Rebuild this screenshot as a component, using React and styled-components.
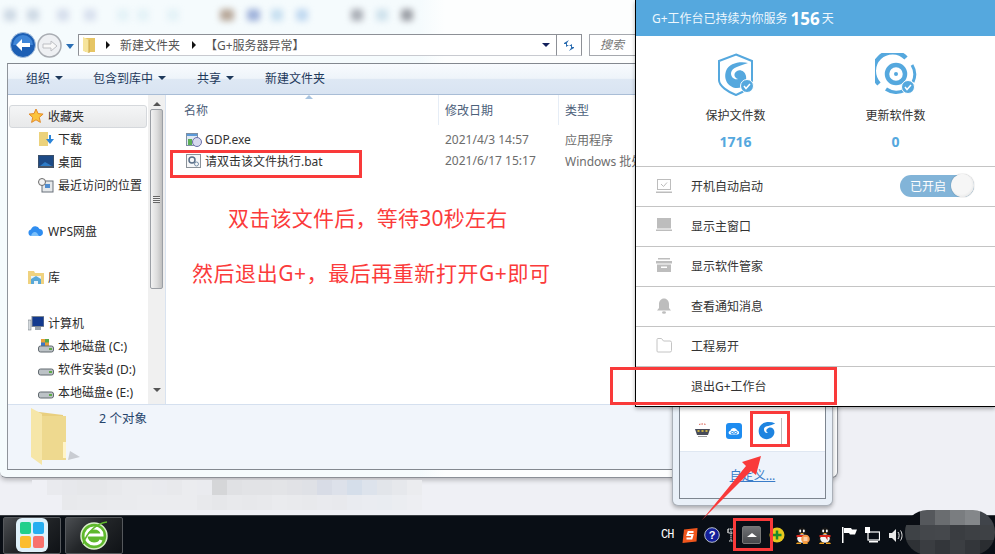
import React from 'react';
import styled, { createGlobalStyle } from 'styled-components';

const Global = createGlobalStyle`
  html, body { margin: 0; padding: 0; }
  body {
    width: 995px;
    height: 554px;
    overflow: hidden;
    font-family: "Noto Sans", "Noto Sans CJK SC", sans-serif;
    font-size: 12px;
    color: #2a2a2a;
  }
`;

const Desktop = styled.div`
  position: relative;
  width: 995px;
  height: 554px;
  overflow: hidden;
  display: flex;
  flex-direction: column;
  justify-content: flex-end;
  background: #eff0f5;
`;

/* ---------- explorer window ---------- */
const ExplorerWindow = styled.div`
  position: absolute;
  left: 0;
  top: 0;
  width: 838px;
  height: 478px;
  box-sizing: border-box;
  display: flex;
  flex-direction: column;
  background: linear-gradient(90deg, #f5fbfd 0, #f5fbfd 420px, #fdfefe 445px);
  border-right: 1px solid #8b8f96;
  border-bottom: 1px solid #8b8f96;
  border-bottom-left-radius: 6px;
  border-bottom-right-radius: 6px;
  box-shadow: 0 2px 5px rgba(0, 0, 0, 0.25);
`;

const TitleStrip = styled.div`
  height: 30px;
  flex: none;
  display: flex;
  align-items: center;
  overflow: hidden;
`;

const BlurBlob = styled.span`
  flex: none;
  width: ${p => p.$w || 12}px;
  height: 12px;
  margin-left: ${p => p.$gap}px;
  border-radius: 3px;
  background: ${p => p.$c};
  filter: blur(3px);
`;

const NavRow = styled.div`
  height: 30px;
  flex: none;
  display: flex;
  align-items: center;
  padding-left: 10px;
`;

const NavDrop = styled.span`
  margin: 2px 0 0 4px;
  width: 0;
  height: 0;
  border-left: 4px solid transparent;
  border-right: 4px solid transparent;
  border-top: 5px solid #2a6fb5;
`;

const AddressBar = styled.div`
  margin-left: 4px;
  width: 479px;
  height: 22px;
  box-sizing: border-box;
  display: flex;
  align-items: center;
  padding-left: 4px;
  background: #fff;
  border: 1px solid #8d9096;
  border-bottom-color: #c8cad0;
  color: #555;
`;

const Crumb = styled.span`
  margin-left: ${p => p.$gap}px;
`;

const CrumbArrow = styled.span`
  margin-left: ${p => p.$gap}px;
  width: 0;
  height: 0;
  border-top: 4px solid transparent;
  border-bottom: 4px solid transparent;
  border-left: 4px solid #111;
`;

const AddressDrop = styled.span`
  margin-left: auto;
  margin-right: 6px;
  width: 0;
  height: 0;
  border-left: 4px solid transparent;
  border-right: 4px solid transparent;
  border-top: 4px solid #12205c;
`;

const RefreshBox = styled.div`
  width: 25px;
  height: 22px;
  box-sizing: border-box;
  display: flex;
  align-items: center;
  justify-content: center;
  background: #fff;
  border: 1px solid #8d9096;
  border-left: 0;
  border-bottom-color: #c8cad0;
`;

const SearchBox = styled.div`
  margin-left: 7px;
  width: 240px;
  height: 22px;
  box-sizing: border-box;
  padding-left: 10px;
  line-height: 20px;
  font-style: italic;
  color: #777;
  background: #fff;
  border: 1px solid #a5a8ae;
`;

const Inner = styled.div`
  margin: 3px 0 0 7px;
  width: 824px;
  height: 407px;
  box-sizing: border-box;
  display: flex;
  flex-direction: column;
  border: 1px solid #83888f;
  border-left-color: #8f949b;
  background: #fff;
`;

const Toolbar = styled.div`
  height: 31px;
  flex: none;
  box-sizing: border-box;
  display: flex;
  align-items: center;
  padding: 0 0 2px 18px;
  color: #1e395b;
  background: linear-gradient(#f8fbfe 0%, #eef4fa 48%, #dee8f4 50%, #d9e4f2 100%);
  border-bottom: 1px solid #a9bdd6;
`;

const ToolItem = styled.span`
  display: flex;
  align-items: center;
  gap: 5px;
  width: ${p => p.$w}px;
`;

const Caret = styled.span`
  width: 0;
  height: 0;
  border-left: 4px solid transparent;
  border-right: 4px solid transparent;
  border-top: 4px solid #1e395b;
`;

const Panes = styled.div`
  flex: 1;
  min-height: 0;
  display: flex;
`;

const Sidebar = styled.div`
  width: 140px;
  flex: none;
  padding: 10px 0 0 1px;
  box-sizing: border-box;
  overflow: hidden;
`;

const NavGroup = styled.div`
  margin-bottom: 23px;
`;

const NavItem = styled.div`
  height: 23px;
  display: flex;
  align-items: center;
  gap: 4px;
  padding: 0 0 1px ${p => (p.$sub ? 29 : 19)}px;
  white-space: nowrap;
  box-sizing: border-box;
  ${p => p.$active && `
    width: 138px;
    border: 1px solid #d5d8dc;
    border-radius: 3px;
    background: linear-gradient(#f4f5f6, #e8e9ea);
    padding-left: 18px;
  `}
`;

const Scrollbar = styled.div`
  width: 17px;
  flex: none;
  display: flex;
  flex-direction: column;
  align-items: center;
  background: #f0f0f0;
  border-right: 1px solid #d9e3f0;
`;

const ScrollThumb = styled.div`
  width: 13px;
  height: 180px;
  margin-top: 3px;
  box-sizing: border-box;
  border: 1px solid #9b9fa5;
  border-radius: 2px;
  background: linear-gradient(90deg, #f2f2f2, #dcdcdc 55%, #bfbfbf);
  display: flex;
  align-items: center;
  justify-content: center;
`;

const Grip = styled.span`
  width: 7px;
  height: 7px;
  background: repeating-linear-gradient(#666 0 1px, #eee 1px 2px);
`;

const ScrollArrow = styled.span`
  margin-top: ${p => p.$top}px;
  width: 0;
  height: 0;
  border-left: 4px solid transparent;
  border-right: 4px solid transparent;
  ${p => (p.$down ? 'border-top: 4px solid #555;' : 'border-bottom: 4px solid #555;')}
`;

const FileArea = styled.div`
  flex: 1;
  position: relative;
  min-width: 0;
  background: #fff;
`;

const ColumnHead = styled.div`
  height: 30px;
  display: grid;
  grid-template-columns: 273px 120px 1fr;
  color: #4c607a;
`;

const HeadCell = styled.div`
  padding: 7px 0 0 ${p => p.$pad || 6}px;
  border-right: 1px solid #e6edf6;
  line-height: 17px;
`;

const SortMark = styled.span`
  position: absolute;
  left: 139px;
  top: 0;
  width: 0;
  height: 0;
  border-left: 4px solid transparent;
  border-right: 4px solid transparent;
  border-bottom: 4px solid #a7c3e0;
`;

const FileRow = styled.div`
  height: 21px;
  display: grid;
  grid-template-columns: 273px 120px 1fr;
  align-items: center;
  margin-top: ${p => p.$top || 0}px;
`;

const FileName = styled.div`
  display: flex;
  align-items: center;
  gap: 3px;
  padding-left: 20px;
  color: #333;
`;

const FileMeta = styled.div`
  padding-left: 6px;
  color: #6d6d6d;
  white-space: nowrap;
`;

const Note = styled.div`
  font-size: 21px;
  line-height: 30px;
  color: #fb3b3b;
  white-space: nowrap;
  letter-spacing: ${p => p.$ls}px;
  margin: ${p => p.$m};
`;

const StatusBar = styled.div`
  height: 65px;
  flex: none;
  display: flex;
  align-items: flex-start;
  gap: 17px;
  padding: 3px 0 0 22px;
  box-sizing: border-box;
  background: #f1f5fb;
  border-top: 1px solid #d5e0ef;
  color: #26446b;
`;

const StatusText = styled.span`
  font-size: 12.5px;
`;

/* ---------- G+ panel ---------- */
const GPanel = styled.div`
  position: absolute;
  left: 635px;
  top: 0;
  width: 360px;
  height: 407px;
  box-sizing: border-box;
  background: #fff;
  border-left: 1px solid #000;
  border-bottom: 1px solid #000;
  box-shadow: 0 2px 4px rgba(0, 0, 0, 0.3);
`;

const GHeader = styled.div`
  height: 36px;
  display: flex;
  align-items: center;
  padding-left: 16px;
  background: #55a8de;
  color: #eef7fd;
`;

const GDays = styled.b`
  margin: 0 2px 0 3px;
  font-size: 17px;
  color: #fff;
`;

const StatRow = styled.div`
  height: 130px;
  display: grid;
  grid-template-columns: 160px 160px;
  justify-content: center;
  padding-top: 17px;
  box-sizing: border-box;
`;

const Stat = styled.div`
  display: flex;
  flex-direction: column;
  align-items: center;
`;

const StatLabel = styled.div`
  margin-top: 11px;
  line-height: 17px;
  color: #333;
`;

const StatValue = styled.div`
  margin-top: 9px;
  line-height: 17px;
  font-size: 14px;
  font-weight: 700;
  color: #55a8de;
`;

const MenuRow = styled.div`
  height: 40px;
  box-sizing: border-box;
  display: flex;
  align-items: center;
  gap: 19px;
  padding: 0 21px 2px 20px;
  border-top: 1px solid #c4c4c4;
  color: #333;
`;

const MenuIcon = styled.span`
  width: 16px;
  height: 16px;
  flex: none;
  display: flex;
`;

const Toggle = styled.span`
  margin-left: auto;
  width: 74px;
  height: 22px;
  box-sizing: border-box;
  display: flex;
  align-items: center;
  justify-content: space-between;
  padding: 0 0 0 10px;
  border-radius: 11px;
  background: #82b4d8;
  color: #fff;
`;

const Knob = styled.span`
  width: 23px;
  height: 23px;
  border-radius: 50%;
  background: radial-gradient(circle at 45% 45%, #f6f6f6 55%, #d5d5d5);
  box-shadow: 0 0 1px rgba(0, 0, 0, 0.5);
`;

/* ---------- tray popup ---------- */
const TrayPopup = styled.div`
  position: absolute;
  left: 672px;
  top: 400px;
  width: 161px;
  height: 106px;
  box-sizing: border-box;
  padding: 0 6px 6px;
  border-radius: 0 0 6px 6px;
  background: #e9f0f8;
  border: 1px solid #aab0b8;
  border-top: 0;
  box-shadow: 0 2px 4px rgba(0, 0, 0, 0.3);
`;

const TrayInner = styled.div`
  height: 100%;
  box-sizing: border-box;
  display: flex;
  flex-direction: column;
  border: 1px solid #7d858f;
  border-top: 0;
`;

const TrayIcons = styled.div`
  height: 52px;
  flex: none;
  box-sizing: border-box;
  display: flex;
  align-items: center;
  gap: 15px;
  padding: 10px 0 0 14px;
  background: #fff;
  border-bottom: 1px solid #dfe7f2;
`;

const TrayDivider = styled.span`
  width: 1px;
  height: 26px;
  margin-left: -10px;
  background: #bbb;
`;

const TrayLink = styled.div`
  flex: 1;
  display: flex;
  align-items: center;
  justify-content: center;
  background: #eef3fb;
  color: #3a7cc8;
  font-size: 12px;
  text-decoration: underline;
`;

/* ---------- taskbar ---------- */
const Taskbar = styled.div`
  position: relative;
  height: 39px;
  flex: none;
  display: flex;
  align-items: center;
  gap: 4px;
  padding-left: 3px;
  background: #090e15;
  border-top: 1px solid #3c4045;
  box-sizing: border-box;
`;

const TaskButton = styled.div`
  width: 58px;
  height: 37px;
  box-sizing: border-box;
  display: flex;
  align-items: center;
  justify-content: center;
  border: 1px solid #55585c;
  border-radius: 2px;
  background: linear-gradient(135deg, #4b4e52 0%, #232629 45%, #0f1216 100%);
`;

const Tray = styled.div`
  margin-left: auto;
  width: 334px;
  display: flex;
  align-items: center;
  color: #fff;
`;

const TrayCH = styled.span`
  font-family: "Liberation Mono", monospace;
  font-size: 12px;
  letter-spacing: -1px;
  width: 21px;
`;

const TraySlot = styled.span`
  display: flex;
  margin-right: ${p => p.$gap}px;
`;

const UpButton = styled.span`
  width: 19px;
  height: 18px;
  margin-right: 8px;
  display: flex;
  align-items: center;
  justify-content: center;
  border-radius: 2px;
  border: 1px solid #777;
  box-sizing: border-box;
  background: linear-gradient(#707275, #46484b);
`;

const UpTri = styled.span`
  width: 0;
  height: 0;
  border-left: 5px solid transparent;
  border-right: 5px solid transparent;
  border-bottom: 4px solid #fff;
`;

/* ---------- annotations over the screenshot ---------- */
const RedBox = styled.div`
  position: absolute;
  left: ${p => p.$x}px;
  top: ${p => p.$y}px;
  width: ${p => p.$w}px;
  height: ${p => p.$h}px;
  box-sizing: border-box;
  border: 3px solid #f93a3a;
  pointer-events: none;
`;

const ArrowLayer = styled.svg`
  position: absolute;
  left: 690px;
  top: 445px;
`;

const Mosaic = styled.div`
  position: absolute;
  left: ${p => p.$x}px;
  top: ${p => p.$y}px;
  display: grid;
  grid-template-columns: repeat(${p => p.$cols}, ${p => p.$size}px);
  grid-auto-rows: ${p => p.$size}px;
  ${p => p.$round && 'border-radius: 22px; overflow: hidden;'}
`;

const MosaicCell = styled.span`
  background: ${p => p.$c};
`;

/* ---------- drawn icons ---------- */
const BackBtn = () => (
  <svg width="26" height="26" viewBox="0 0 26 26">
    <circle cx="13" cy="13" r="12.5" fill="#1d5fb4" stroke="#a8c0dc" />
    <path d="M3 13a10 10 0 0 1 20 0z" fill="#3f86d8" />
    <path d="M6 13l6-6v4h8v4h-8v4z" fill="#fff" />
  </svg>
);

const FwdBtn = () => (
  <svg width="25" height="25" viewBox="0 0 25 25" style={{ marginLeft: 1 }}>
    <circle cx="12.5" cy="12.5" r="11.5" fill="#eef0f3" stroke="#a9adb3" strokeWidth="1.5" />
    <path d="M20 13l-6-5v3H6v4h8v3z" fill="#f8f8f8" stroke="#bdbfc3" />
  </svg>
);

const AddressFolder = () => (
  <svg width="13" height="16" viewBox="0 0 13 16">
    <path d="M2 1h10v14H2z" fill="#e6c564" />
    <path d="M0 0l6 3v13l-6-2z" fill="#f6e49c" />
    <path d="M6 3v13" stroke="#c9a648" />
  </svg>
);

const Star = () => (
  <svg width="16" height="16" viewBox="0 0 16 16">
    <path d="M8 1l2.1 4.6 5 .5-3.8 3.3 1.1 5L8 11.8 3.600 14.400l1.100-5L1 6.100l5-.5z" fill="#fbc43c" stroke="#e28a2b" />
  </svg>
);

const DownloadIcon = () => (
  <svg width="16" height="16" viewBox="0 0 16 16">
    <path d="M1 1h9v14H1z" fill="#ecd27c" />
    <path d="M8 8h3V4h2v4h3l-4 5z" fill="#2b84d8" />
  </svg>
);

const DesktopIcon = () => (
  <svg width="16" height="14" viewBox="0 0 16 14">
    <rect x="0.500" y="0.500" width="15" height="12" fill="#1d4a86" stroke="#3a4f6a" />
    <path d="M2 11l5-4 7 4z" fill="#2d7bc6" />
    <rect x="1" y="11" width="14" height="2" fill="#4a5666" />
  </svg>
);

const RecentIcon = () => (
  <svg width="16" height="15" viewBox="0 0 16 15">
    <rect x="4" y="3" width="11" height="11" fill="#e5e8ea" stroke="#69707a" />
    <rect x="7" y="6" width="5" height="4" fill="#4f8ccf" />
    <circle cx="4" cy="4" r="3.500" fill="#f4f4f4" stroke="#6a6a6a" />
  </svg>
);

const CloudIcon = () => (
  <svg width="16" height="12" viewBox="0 0 16 12">
    <path d="M3.500 11a3.300 3.300 0 0 1-.500-6.500A4.500 4.500 0 0 1 11.500 4 3.600 3.600 0 0 1 12.500 11z" fill="#2f8df0" />
    <path d="M3 11c1-4 4-5 6-3l2 3z" fill="#7cc0fa" />
  </svg>
);

const LibraryIcon = () => (
  <svg width="16" height="15" viewBox="0 0 16 15">
    <path d="M0 1h6l1 2h9v11H0z" fill="#efd27f" />
    <path d="M3 6h10v8H3z" fill="#e9f3fa" />
    <path d="M3 9l5-3 5 3v5h-3v-3H6v3H3z" fill="#58a8d8" />
  </svg>
);

const ComputerIcon = () => (
  <svg width="16" height="15" viewBox="0 0 16 15">
    <rect x="0" y="4" width="3" height="10" fill="#d5dade" stroke="#697078" strokeWidth="0.500" />
    <rect x="4" y="0.500" width="12" height="10" fill="#12398e" stroke="#7e8893" />
    <rect x="7" y="11" width="6" height="3" fill="#9aa3ac" />
  </svg>
);

const DriveIcon = ({ win }) => (
  <svg width="16" height="14" viewBox="0 0 16 14">
    {win && <rect x="3" y="0" width="8" height="7" fill="#e8a03a" />}
    {win && <rect x="7" y="0" width="4" height="3.500" fill="#56a74a" />}
    {win && <rect x="3" y="3.500" width="4" height="3.500" fill="#3a78c9" />}
    <rect x="0.500" y="7" width="15" height="6" rx="2" fill="#bcc2c6" stroke="#626a70" />
    <rect x="11" y="9" width="3" height="2" fill="#5dac48" />
  </svg>
);

const ExeIcon = () => (
  <svg width="16" height="16" viewBox="0 0 16 16">
    <rect x="0.500" y="1.500" width="11" height="12" fill="#dfe8f2" stroke="#7e8fa3" />
    <rect x="1" y="2" width="10" height="2" fill="#5c9ad8" />
    <rect x="2" y="7" width="4" height="6" fill="#5cae55" />
    <circle cx="11" cy="10" r="4.500" fill="#d6d9ee" stroke="#6a70a8" />
  </svg>
);

const BatIcon = () => (
  <svg width="16" height="16" viewBox="0 0 16 16">
    <rect x="0.500" y="1.500" width="14" height="13" fill="#f6f7f8" stroke="#8b9299" />
    <circle cx="6" cy="7" r="3" fill="none" stroke="#5a6f88" strokeWidth="1.500" />
    <circle cx="10.500" cy="11" r="2" fill="none" stroke="#7890a8" />
  </svg>
);

const RefreshIcon = () => (
  <svg width="14" height="13" viewBox="0 0 14 13">
    <path d="M7 1L2 4v1h2v3l3-2H5V4z" fill="#2b6cb0" />
    <path d="M7 12l5-3V8h-2V5L7 7h2v2z" fill="#2b6cb0" />
  </svg>
);

const BigFolder = () => (
  <svg width="52" height="60" viewBox="0 0 52 60">
    <path d="M38 52l12-3-10-6z" fill="#c9ccd2" />
    <path d="M1 3l32 4 0 2h0v42H11L1 45z" fill="#e9cf7f" />
    <path d="M11 8h25v44H11z" fill="#eed98f" />
    <path d="M1 0l11 6v51L1 49z" fill="#f6e6a8" />
    <rect x="33" y="34" width="3" height="16" fill="#fff4c8" />
  </svg>
);

const TraySwirl = () => (
  <svg width="19" height="21" viewBox="0 0 24 24">
    <path
      d="M23 3C16 0 6 1 3 8 0 16 5 23 12 23c6 0 10-4 10-9 0-4-4-7-8-5-3 1-3 5 0 6-3 1-6-2-5-6 1-3 8-3 14-6z"
      fill="#1e84e0"
    />
  </svg>
);

const Badge = ({ x, y }) => (
  <g transform={`translate(${x} ${y})`}>
    <circle r="6.500" fill="#55a8de" stroke="#fff" strokeWidth="1" />
    <path d="M-3 0l2 2.500 4-4.500" fill="none" stroke="#fff" strokeWidth="1.500" />
  </g>
);

const ShieldIcon = () => (
  <svg width="42" height="43" viewBox="0 0 42 43">
    <path
      d="M21 1.500L37 8v19c0 6-8 12-16 15C13 39 4 33 4 27V8z"
      fill="#fff"
      stroke="#55a8de"
      strokeWidth="2"
    />
    <path
      d="M33 10C25 8 14 10 11 18 8 27 14 35 22 35c7 0 10-6 9-12-1-5-6-7-9-5-4 2-3 7 1 8-3 1-7-1-7-6 1-6 9-7 17-10z"
      fill="#55a8de"
    />
    <Badge x={32} y={33} />
  </svg>
);

const DiskIcon = () => (
  <svg width="42" height="43" viewBox="0 0 42 43">
    <path d="M4 31A18 18 0 0 1 31 5" fill="none" stroke="#55a8de" strokeWidth="4.500" />
    <path d="M37 12A18 18 0 0 1 38 29" fill="none" stroke="#55a8de" strokeWidth="3" />
    <path d="M11 36A18 18 0 0 0 30 37" fill="none" stroke="#55a8de" strokeWidth="3.500" />
    <circle cx="21" cy="21" r="9" fill="none" stroke="#55a8de" strokeWidth="4.500" />
    <circle cx="21" cy="21" r="2" fill="#55a8de" />
    <Badge x={33} y={34} />
  </svg>
);

const AutoStartIcon = () => (
  <svg width="16" height="16" viewBox="0 0 16 16">
    <rect x="1.500" y="1.500" width="13" height="10" fill="none" stroke="#bdbdbd" />
    <path d="M5 6l2.500 2.500L11 4.500" fill="none" stroke="#bdbdbd" />
    <rect x="0" y="13.500" width="16" height="1.500" fill="#bdbdbd" />
  </svg>
);

const MonitorIcon = () => (
  <svg width="16" height="14" viewBox="0 0 16 14">
    <rect x="1" y="0" width="14" height="10.500" fill="#bdbdbd" />
    <rect x="0" y="11.500" width="16" height="1.500" fill="#bdbdbd" />
  </svg>
);

const BoxIcon = () => (
  <svg width="16" height="14" viewBox="0 0 16 14">
    <rect x="2" y="0" width="12" height="1.500" fill="#bdbdbd" />
    <rect x="0" y="3" width="16" height="2.500" fill="#bdbdbd" />
    <path d="M1 6.500h14V14H1z" fill="#bdbdbd" />
    <rect x="5" y="8.500" width="6" height="1.500" fill="#fff" />
  </svg>
);

const BellIcon = () => (
  <svg width="16" height="16" viewBox="0 0 16 16">
    <path d="M8 0.500c3 0 5 2.500 5 5.500v4l2 2.500H1L3 10V6c0-3 2-5.500 5-5.500z" fill="#bdbdbd" />
    <ellipse cx="8" cy="14.500" rx="2" ry="1.200" fill="#bdbdbd" />
  </svg>
);

const FolderOutline = () => (
  <svg width="16" height="15" viewBox="0 0 16 15">
    <path d="M1 1.500a1 1 0 0 1 1-1h3.500l2 2.500H14a1.500 1.500 0 0 1 1.500 1.500v8A1.500 1.500 0 0 1 14 14H2a1 1 0 0 1-1-1z" fill="none" stroke="#c4c4c4" />
  </svg>
);

const GameIcon = () => (
  <svg width="17" height="15" viewBox="0 0 17 15">
    <path d="M5 1.500a8 5 0 0 1 7 0" fill="none" stroke="#d64a3a" strokeDasharray="1.500 1" />
    <path d="M1 6h15l-2 6H3z" fill="#474b58" />
    <path d="M3.500 8h2M7.500 8h2M11.500 8h2" stroke="#f2d23c" strokeWidth="1.500" />
    <path d="M4 13.500h9" stroke="#9a9a9a" />
  </svg>
);

const CloudTileIcon = () => (
  <svg width="16" height="16" viewBox="0 0 16 16">
    <rect width="16" height="16" rx="3" fill="#1e8cf0" />
    <path d="M4.500 11.500C2 11.500 2 8 4.500 7.800 5 4 10.500 4 11 7.500c2.500 0 3 4 .300 4z" fill="#fff" />
    <path d="M8 9.500C7 8 5 8.200 5 9.600s2 1.500 3 0c1 1.500 3 1.400 3 0S9 8 8 9.500z" fill="none" stroke="#1e8cf0" />
  </svg>
);

const SogouIcon = () => (
  <svg width="16" height="17" viewBox="0 0 16 17">
    <path d="M2 2.500L15.500 1l-1 13.500L.500 16z" fill="#f0561d" />
    <path d="M11.500 5h-5l-1 3h5l-1 3.500h-5" fill="none" stroke="#fff" strokeWidth="2" />
  </svg>
);

const HelpIcon = () => (
  <svg width="16" height="16" viewBox="0 0 16 16">
    <circle cx="8" cy="8" r="7.300" fill="#14209a" stroke="#b8c0cc" />
    <text x="8" y="12" textAnchor="middle" fontSize="11" fontWeight="700" fill="#fff" fontFamily="Liberation Sans">?</text>
  </svg>
);

const TinyGlyph = () => (
  <svg width="8" height="14" viewBox="0 0 8 14">
    <path d="M1 1h6v4H1zM1 1v4M4 1v12M2 13h4" fill="none" stroke="#e8e8e8" strokeWidth="1" strokeDasharray="1.500 .5" />
  </svg>
);

const PlusIcon = () => (
  <svg width="16" height="16" viewBox="0 0 16 16">
    <circle cx="8" cy="8" r="7.500" fill="#e8c81e" />
    <path d="M8 3.500v9M3.500 8h9" stroke="#1d8a2a" strokeWidth="2.500" />
  </svg>
);

const Penguin = ({ chat }) => (
  <svg width="16" height="17" viewBox="0 0 16 17">
    <ellipse cx="8" cy="5.500" rx="4.500" ry="5" fill="#161616" />
    <ellipse cx="6.200" cy="4" rx="1" ry="1.400" fill="#fff" />
    <ellipse cx="9.800" cy="4" rx="1" ry="1.400" fill="#fff" />
    <path d="M6 6h4L8 7.500z" fill="#f0a020" />
    <path d="M3 9l-2 4 2 1zM13 9l2 4-2 1z" fill="#161616" />
    <ellipse cx="8" cy="11.500" rx="4.800" ry="4.300" fill="#f5f5f5" />
    <path d="M2.500 8h11v2H10.500v3.500L8.500 10h-6z" fill="#d8261c" />
    <path d="M3 15.500h4V17H2zM9 15.500h4l1 1.500H9z" fill="#f0a020" />
    {chat && <circle cx="11.500" cy="12" r="4.300" fill="#f59a4a" />}
    {chat && <path d="M9.500 11h4M9.500 13h4" stroke="#fff" />}
  </svg>
);

const FlagIcon = () => (
  <svg width="15" height="16" viewBox="0 0 15 16">
    <rect x="0" y="0" width="1.500" height="16" fill="#fff" />
    <path d="M2 1h7l1 1.500h5L13 7.500H8L7 6H2z" fill="#fff" />
  </svg>
);

const NetIcon = () => (
  <svg width="15" height="16" viewBox="0 0 15 16">
    <rect x="0" y="0" width="5" height="6" fill="#fff" />
    <rect x="3" y="5" width="11.500" height="8" fill="none" stroke="#fff" strokeWidth="1.200" />
    <rect x="4" y="14" width="9" height="1.500" fill="#fff" />
  </svg>
);

const SpeakerIcon = () => (
  <svg width="14" height="15" viewBox="0 0 14 15">
    <path d="M0 5h3l4-4v13l-4-4H0z" fill="#e8e8e8" />
    <path d="M9 4c1.500 2 1.500 5 0 7M11.500 2.500c2 3 2 7 0 10" fill="none" stroke="#e8e8e8" />
  </svg>
);

const StartLogo = () => (
  <svg width="32" height="34" viewBox="0 0 32 34">
    <rect width="32" height="34" rx="6" fill="#dff1fa" />
    <rect x="4" y="4" width="11" height="12" rx="2" fill="#22cf8b" />
    <rect x="17" y="4" width="11" height="12" rx="2" fill="#26aef0" />
    <rect x="4" y="18" width="11" height="12" rx="2" fill="#fcbd2e" />
    <rect x="17" y="18" width="11" height="12" rx="2" fill="#f8716c" />
  </svg>
);

const IeLogo = () => (
  <svg width="30" height="30" viewBox="0 0 30 30">
    <circle cx="15" cy="16" r="13" fill="#5fb82c" stroke="#d8eec8" strokeWidth="1.500" />
    <path d="M7 15h16c0-4-3-7-8-7s-8 4-8 8 3 8 8 8c3 0 6-1 7-4" fill="none" stroke="#fff" strokeWidth="3" />
    <path d="M4 24C8 12 18 3 28 2" fill="none" stroke="#5fb82c" strokeWidth="1.500" />
  </svg>
);

const topBlobs = [
  { gap: 4, c: '#cdd8e4' },
  { gap: 11, c: '#cdd8e4' },
  { gap: 18, c: '#d6deec' },
  { gap: 15, c: '#d8e0ee' },
  { gap: 21, c: '#e4f2f7' },
  { gap: 8, c: '#e4f2f7' },
  { gap: 18, c: '#e4f2f7' },
  { gap: 41, c: '#b8a89a', w: 14 },
  { gap: 13, c: '#9fb2da', w: 13 },
  { gap: 11, c: '#c7dff0' },
  { gap: 13, c: '#c0d8f0' },
  { gap: 43, c: '#a9adb5' },
  { gap: 13, c: '#cfe2ec' },
  { gap: 13, c: '#9a9da4' },
];

const sideGroups = [
  [
    { label: '收藏夹', icon: <Star />, active: true },
    { label: '下载', icon: <DownloadIcon />, sub: true },
    { label: '桌面', icon: <DesktopIcon />, sub: true },
    { label: '最近访问的位置', icon: <RecentIcon />, sub: true },
  ],
  [{ label: 'WPS网盘', icon: <CloudIcon /> }],
  [{ label: '库', icon: <LibraryIcon /> }],
  [
    { label: '计算机', icon: <ComputerIcon /> },
    { label: '本地磁盘 (C:)', icon: <DriveIcon win />, sub: true },
    { label: '软件安装d (D:)', icon: <DriveIcon />, sub: true },
    { label: '本地磁盘e (E:)', icon: <DriveIcon />, sub: true },
  ],
];

const menuItems = [
  { label: '显示主窗口', icon: <MonitorIcon /> },
  { label: '显示软件管家', icon: <BoxIcon /> },
  { label: '查看通知消息', icon: <BellIcon /> },
  { label: '工程易开', icon: <FolderOutline /> },
  { label: '退出G+工作台', icon: null },
];

const stripCells = [
  '#eff0f5', '#e9eaee', '#e7e8ec', '#e6e7ea', '#e6e7ea', '#e8e9ec', '#eaebee', '#eaebee', '#e9eaee', '#e8e9ec', '#ebecef', '#eaebef',
  '#d5d6d8', '#e0e1e4', '#e2e3e6', '#e2e3e6', '#e3e4e7', '#e1e2e6', '#dfe1e6', '#d8dce6', '#dde1ea', '#d5deea', '#dde3ec', '#e2e5ea', '#e6e8ec', '#ebecef',
  '#eff0f5', '#eff0f5', '#e8e9ec', '#e9eaed', '#e9eaed', '#eaebee', '#eaebee', '#ebecef', '#ebecef', '#ebecef', '#ebecef', '#e8e9ec', '#e6e7ea',
  '#e8e9ec', '#e7e8eb', '#e8e9ec', '#eaebee', '#e9eaed', '#e8e9ec', '#e9eaee', '#e8e9ed', '#e9ebf0', '#eaecf1', '#e9ecf1', '#ebedf1', '#edeef2',
];

const trayCells = [
  '#0a0e14', '#55585c', '#6a6d70', '#7a7d80', '#84878a', '#40444a',
  '#3e4246', '#44474b', '#45484c', '#3a3d41', '#3d4044', '#3e4145',
  '#2e3135', '#3a3d41', '#33363a', '#3b3e42', '#33363a', '#2a2d31',
];

export default function App() {
  return (
    <Desktop>
      <Global />

      <ExplorerWindow>
        <TitleStrip>
          {topBlobs.map((b, i) => (
            <BlurBlob key={i} $gap={b.gap} $c={b.c} $w={b.w} />
          ))}
        </TitleStrip>

        <NavRow>
          <BackBtn />
          <FwdBtn />
          <NavDrop />
          <AddressBar>
            <AddressFolder />
            <CrumbArrow $gap={10} />
            <Crumb $gap={10}>新建文件夹</Crumb>
            <CrumbArrow $gap={12} />
            <Crumb $gap={9}>【G+服务器异常】</Crumb>
            <AddressDrop />
          </AddressBar>
          <RefreshBox>
            <RefreshIcon />
          </RefreshBox>
          <SearchBox>搜索</SearchBox>
        </NavRow>

        <Inner>
          <Toolbar>
            <ToolItem $w={67}>组织 <Caret /></ToolItem>
            <ToolItem $w={104}>包含到库中 <Caret /></ToolItem>
            <ToolItem $w={68}>共享 <Caret /></ToolItem>
            <ToolItem $w={80}>新建文件夹</ToolItem>
          </Toolbar>

          <Panes>
            <Sidebar>
              {sideGroups.map((group, i) => (
                <NavGroup key={i}>
                  {group.map(item => (
                    <NavItem key={item.label} $sub={item.sub} $active={item.active}>
                      {item.icon}
                      <span>{item.label}</span>
                    </NavItem>
                  ))}
                </NavGroup>
              ))}
            </Sidebar>

            <Scrollbar>
              <ScrollArrow $top={7} />
              <ScrollThumb>
                <Grip />
              </ScrollThumb>
              <ScrollArrow $top={99} $down />
            </Scrollbar>

            <FileArea>
              <SortMark />
              <ColumnHead>
                <HeadCell $pad={18}>名称</HeadCell>
                <HeadCell>修改日期</HeadCell>
                <HeadCell>类型</HeadCell>
              </ColumnHead>
              <FileRow $top={4}>
                <FileName><ExeIcon />GDP.exe</FileName>
                <FileMeta>2021/4/3 14:57</FileMeta>
                <FileMeta>应用程序</FileMeta>
              </FileRow>
              <FileRow>
                <FileName><BatIcon />请双击该文件执行.bat</FileName>
                <FileMeta>2021/6/17 15:17</FileMeta>
                <FileMeta>Windows 批处理文件</FileMeta>
              </FileRow>
              <Note $m="32px 0 0 62px" $ls={0.25}>双击该文件后，等待30秒左右</Note>
              <Note $m="25px 0 0 26px" $ls={0.55}>然后退出G+，最后再重新打开G+即可</Note>
            </FileArea>
          </Panes>

          <StatusBar>
            <BigFolder />
            <StatusText>2 个对象</StatusText>
          </StatusBar>
        </Inner>
      </ExplorerWindow>

      <Mosaic $x={32} $y={480} $cols={26} $size={15}>
        {stripCells.map((c, i) => <MosaicCell key={i} $c={c} />)}
      </Mosaic>

      <TrayPopup>
        <TrayInner>
          <TrayIcons>
            <GameIcon />
            <CloudTileIcon />
            <TraySwirl />
            <TrayDivider />
          </TrayIcons>
          <TrayLink>自定义...</TrayLink>
        </TrayInner>
      </TrayPopup>

      <GPanel>
        <GHeader>
          G+工作台已持续为你服务<GDays>156</GDays>天
        </GHeader>
        <StatRow>
          <Stat>
            <ShieldIcon />
            <StatLabel>保护文件数</StatLabel>
            <StatValue>1716</StatValue>
          </Stat>
          <Stat>
            <DiskIcon />
            <StatLabel>更新软件数</StatLabel>
            <StatValue>0</StatValue>
          </Stat>
        </StatRow>
        <MenuRow>
          <MenuIcon><AutoStartIcon /></MenuIcon>
          开机自动启动
          <Toggle>已开启<Knob /></Toggle>
        </MenuRow>
        {menuItems.map(item => (
          <MenuRow key={item.label}>
            <MenuIcon>{item.icon}</MenuIcon>
            {item.label}
          </MenuRow>
        ))}
      </GPanel>

      <Taskbar>
        <TaskButton><StartLogo /></TaskButton>
        <TaskButton><IeLogo /></TaskButton>
        <Tray>
          <TrayCH>CH</TrayCH>
          <TraySlot $gap={6}><SogouIcon /></TraySlot>
          <TraySlot $gap={7}><HelpIcon /></TraySlot>
          <TraySlot $gap={7}><TinyGlyph /></TraySlot>
          <UpButton><UpTri /></UpButton>
          <TraySlot $gap={9}><PlusIcon /></TraySlot>
          <TraySlot $gap={7}><Penguin chat /></TraySlot>
          <TraySlot $gap={9}><Penguin /></TraySlot>
          <TraySlot $gap={8}><FlagIcon /></TraySlot>
          <TraySlot $gap={9}><NetIcon /></TraySlot>
          <TraySlot $gap={0}><SpeakerIcon /></TraySlot>
        </Tray>
      </Taskbar>

      <Mosaic $x={905} $y={510} $cols={6} $size={15} $round>
        {trayCells.map((c, i) => <MosaicCell key={i} $c={c} />)}
      </Mosaic>

      <RedBox $x={170} $y={150} $w={192} $h={28} />
      <RedBox $x={610} $y={367} $w={227} $h={38} />
      <RedBox $x={750} $y={411} $w={40} $h={36} />
      <RedBox $x={733} $y={518} $w={40} $h={33} />

      <ArrowLayer width="90" height="85" viewBox="0 0 90 85">
        <path d="M12 75L56 21l-4-4 19-6-5 19-5-4z" fill="#f93a3a" />
      </ArrowLayer>
    </Desktop>
  );
}
